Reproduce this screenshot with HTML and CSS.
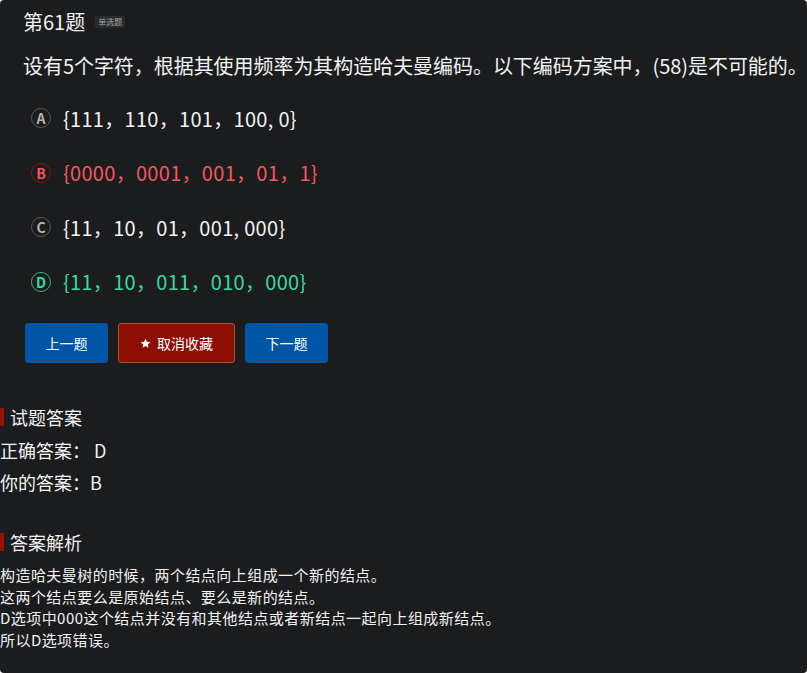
FILE: index.html
```html
<!DOCTYPE html>
<html lang="zh-CN">
<head>
<meta charset="utf-8">
<title>第61题</title>
<link rel="stylesheet" href="styles.css">
</head>
<body>
<div class="page">
  <section class="question">
    <div class="title-row">
      <span class="title">第61题</span>
      <span class="tag">单选题</span>
    </div>
    <p class="stem">设有5个字符，根据其使用频率为其构造哈夫曼编码。以下编码方案中，(58)是不可能的。</p>
    <ul class="options">
      <li class="option"><span class="letter">A</span><span class="opt-text">{111，110，101，100, 0}</span></li>
      <li class="option wrong"><span class="letter">B</span><span class="opt-text">{0000，0001，001，01，1}</span></li>
      <li class="option"><span class="letter">C</span><span class="opt-text">{11，10，01，001, 000}</span></li>
      <li class="option right"><span class="letter">D</span><span class="opt-text">{11，10，011，010，000}</span></li>
    </ul>
    <div class="actions">
      <button class="btn btn-blue">上一题</button>
      <button class="btn btn-red"><svg class="star" viewBox="0 0 24 24" width="11" height="11"><path d="M12 1.5l3.1 6.9 7.4.7-5.6 5 1.7 7.4L12 17.6l-6.6 3.9 1.7-7.4-5.6-5 7.4-.7z" fill="#ffffff"/></svg>取消收藏</button>
      <button class="btn btn-blue">下一题</button>
    </div>
  </section>
  <section class="answer">
    <h3 class="sec-title">试题答案</h3>
    <p class="ans-line">正确答案：&nbsp;D</p>
    <p class="ans-line">你的答案：B</p>
    <h3 class="sec-title sec-gap">答案解析</h3>
    <div class="analysis">
      <div class="a-line">构造哈夫曼树的时候，两个结点向上组成一个新的结点。</div>
      <div class="a-line">这两个结点要么是原始结点、要么是新的结点。</div>
      <div class="a-line">D选项中000这个结点并没有和其他结点或者新结点一起向上组成新结点。</div>
      <div class="a-line">所以D选项错误。</div>
    </div>
  </section>
</div>
</body>
</html>
```
FILE: styles.css
```css
html, body {
  margin: 0;
  padding: 0;
  background: #ffffff;
}
body {
  font-family: "Microsoft YaHei", "Noto Sans CJK SC", "Noto Sans", sans-serif;
  color: #f2f2f2;
}
.page {
  background: #1b1c1e;
  height: 673px;
  border-radius: 4px;
  box-sizing: border-box;
  padding-top: 8px;
  overflow: hidden;
}
.question {
  padding: 0 0 0 23px;
}
.title-row {
  display: flex;
  align-items: center;
  gap: 10px;
  height: 28px;
}
.title {
  font-size: 20px;
  line-height: 28px;
}
.tag {
  font-size: 8px;
  line-height: 12px;
  padding: 0 3px;
  background: #2a2b2d;
  color: #a0a0a0;
  border-radius: 2px;
}
.stem {
  margin: 16px 0 0;
  font-size: 20px;
  line-height: 28px;
  white-space: nowrap;
  letter-spacing: -0.05px;
}
.options {
  list-style: none;
  margin: 11px 0 0;
  padding: 0 0 0 8px;
}
.option {
  display: flex;
  align-items: center;
  gap: 12px;
  height: 54.5px;
  font-size: 20px;
}
.letter {
  width: 18px;
  height: 18px;
  border: 1.5px solid #5a5a5a;
  border-radius: 50%;
  display: flex;
  align-items: center;
  justify-content: center;
  font-size: 14px;
  font-weight: bold;
  color: #b5b5b5;
  line-height: 1;
}
.opt-text {
  color: #f2f2f2;
  letter-spacing: 0.3px;
}
.wrong .letter {
  border-color: #8a1414;
  color: #f5575a;
}
.wrong .opt-text {
  color: #f5575a;
}
.right .letter {
  border-color: #2fb884;
  color: #3bd99e;
}
.right .opt-text {
  color: #3bd99e;
}
.actions {
  display: flex;
  gap: 10px;
  margin: 14px 0 0 2px;
}
.btn {
  height: 40px;
  border-radius: 3px;
  border: 1px solid transparent;
  color: #ffffff;
  font-family: inherit;
  font-size: 14px;
  display: flex;
  align-items: center;
  justify-content: center;
  gap: 6px;
  padding: 0;
  cursor: pointer;
}
.btn-blue {
  width: 83px;
  background: #0055a6;
  border-color: #0055a6;
}
.btn-red {
  width: 117px;
  background: #8d0e05;
  border-color: #a05a1e;
}
.star {
  display: block;
}
.answer {
  margin-top: 42px;
}
.sec-title {
  margin: 0;
  font-weight: normal;
  font-size: 18px;
  line-height: 24px;
  display: flex;
  align-items: center;
  gap: 6px;
}
.sec-title::before {
  content: "";
  width: 4px;
  height: 18px;
  background: #9b1006;
}
.sec-gap {
  margin-top: 32px;
}
.ans-line {
  margin: 0;
  font-size: 18px;
  line-height: 32px;
}
.ans-line:first-of-type {
  margin-top: 5px;
}
.analysis {
  margin-top: 10px;
  font-size: 15px;
  letter-spacing: 0.45px;
}
.a-line {
  height: 21.5px;
  line-height: 21.5px;
}
```
